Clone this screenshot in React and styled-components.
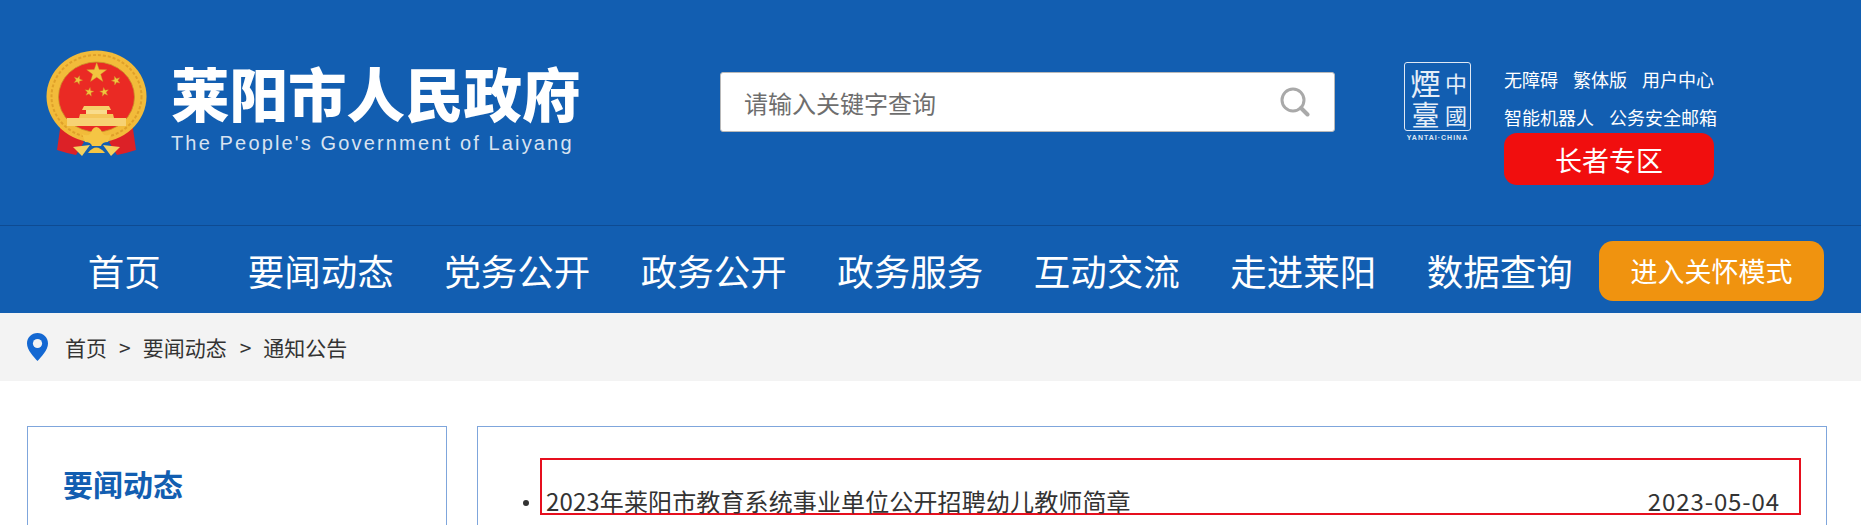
import React from "react";
import styled, { createGlobalStyle } from "styled-components";

const CJK = `"Noto Sans CJK SC", "Noto Sans", sans-serif`;

const GlobalStyle = createGlobalStyle`
html, body {
  margin: 0;
  padding: 0;
  background: #fff;
  font-family: ${CJK};
}
`;

const Page = styled.div`
height: 100vh;
overflow: hidden;
`;

const Header = styled.header`
display: flex;
height: 225px;
box-sizing: content-box;
padding-left: 46px;
background: #125eb1;
border-bottom: 1px solid #0e4b92;
`;

const Brand = styled.div`
display: flex;
width: 674px;
padding-top: 50px;
align-items: flex-start;
`;

const BrandText = styled.div`
display: flex;
flex-direction: column;
margin-left: 24px;
margin-top: 10px;
`;

const BrandName = styled.div`
font-size: 58.5px;
line-height: 64px;
font-weight: 900;
color: #fff;
white-space: nowrap;
`;

const BrandSub = styled.div`
font-family: "Liberation Sans", Arial, sans-serif;
font-size: 20px;
line-height: 24px;
letter-spacing: 2.15px;
color: #d8e3f1;
white-space: nowrap;
margin-top: 7px;
`;

const SearchBox = styled.div`
display: flex;
align-items: center;
justify-content: space-between;
box-sizing: border-box;
width: 615px;
height: 60px;
margin-top: 72px;
padding: 0 24px 0 23px;
background: #fff;
border: 1px solid #b9b9b9;
border-radius: 3px;
`;

const SearchInput = styled.input`
flex: 1;
padding: 0;
border: none;
outline: none;
background: transparent;
font-family: ${CJK};
font-size: 24px;
color: #666;
&::placeholder {
  color: #6e6e6e;
  opacity: 1;
}
`;

const Seal = styled.div`
display: flex;
flex-direction: column;
align-items: center;
width: 67px;
margin-left: 69px;
margin-top: 62px;
`;

const SealFrame = styled.div`
display: grid;
grid-template-columns: 37px 24px;
grid-template-rows: 34px 29px;
box-sizing: border-box;
width: 67px;
height: 69px;
padding: 2px;
border: 1px solid #dfe8f4;
border-radius: 3px;
color: #e6eef8;
font-family: "Noto Sans CJK TC", sans-serif;
font-weight: 400;
`;

const SealChar = styled.span`
display: flex;
align-items: center;
justify-content: center;
font-size: ${(p) => p.$size}px;
line-height: 1;
`;

const SealCaption = styled.div`
font-family: "Liberation Sans", Arial, sans-serif;
font-size: 7px;
line-height: 8px;
font-weight: 700;
letter-spacing: 1px;
margin-top: 3px;
color: #dfe8f4;
white-space: nowrap;
`;

const TopLinks = styled.div`
display: flex;
flex-direction: column;
width: 214px;
margin-left: 33px;
margin-top: 66px;
`;

const LinkRow = styled.div`
display: flex;
gap: 15px;
height: ${(p) => p.$height}px;
font-size: 18px;
line-height: 26px;
color: #fff;
white-space: nowrap;
`;

const ElderButton = styled.button`
width: 210px;
height: 52px;
padding: 0;
border: none;
border-radius: 13px;
background: #f10e0e;
color: #fff;
font-family: ${CJK};
font-size: 27px;
`;

const Nav = styled.nav`
display: flex;
align-items: center;
height: 87px;
padding-left: 26px;
background: #125eb1;
`;

const NavItem = styled.a`
width: 196.5px;
text-align: center;
font-size: 36.5px;
line-height: 50px;
margin-top: 2px;
color: #fff;
`;

const CareButton = styled.button`
width: 225px;
height: 60px;
margin-left: 1px;
margin-top: 2px;
padding: 0;
border: none;
border-radius: 14px;
background: #f0930f;
color: #fff;
font-family: ${CJK};
font-size: 27px;
`;

const Breadcrumb = styled.div`
display: flex;
align-items: center;
height: 68px;
padding-left: 27px;
background: #f3f3f3;
font-size: 21px;
color: #333;
`;

const Crumb = styled.span`
margin-left: ${(p) => p.$gap}px;
`;

const Main = styled.main`
display: flex;
gap: 30px;
padding: 45px 34px 0 27px;
`;

const SidePanel = styled.aside`
box-sizing: border-box;
width: 420px;
height: 400px;
padding: 28px 35px;
border: 1px solid #7fa6dc;
`;

const SideTitle = styled.h2`
margin: 0;
font-size: 30px;
line-height: 56px;
font-weight: 700;
color: #125eb1;
`;

const ListPanel = styled.section`
box-sizing: border-box;
flex: 1;
height: 400px;
padding: 31px 25px 0 45px;
border: 1px solid #7fa6dc;
`;

const ListRow = styled.div`
display: flex;
align-items: flex-end;
`;

const Bullet = styled.span`
flex: none;
width: 6px;
height: 6px;
margin: 0 11px 9px 0;
border-radius: 50%;
background: #333;
`;

const NewsItem = styled.a`
flex: 1;
display: flex;
align-items: flex-end;
justify-content: space-between;
box-sizing: border-box;
height: 57px;
padding: 0 19px 0 4px;
border: 2px solid #e60f1e;
font-size: 24px;
line-height: 24px;
color: #333;
`;

const NewsTitle = styled.span`
letter-spacing: 0.13px;
`;

const NewsDate = styled.span`
letter-spacing: 0.9px;
`;

const Star = ({ cx, cy, r, rot = 0 }) => {
  const pts = [];
  for (let i = 0; i < 10; i++) {
    const rad = i % 2 ? r * 0.4 : r;
    const a = ((i * 36 + rot - 90) * Math.PI) / 180;
    pts.push(`${(cx + rad * Math.cos(a)).toFixed(2)},${(cy + rad * Math.sin(a)).toFixed(2)}`);
  }
  return <polygon points={pts.join(" ")} fill="#f2c53f" stroke="#c9962a" strokeWidth="0.4" />;
};

const Emblem = () => (
  <svg width="101" height="107" viewBox="0 0 101 107" style={{ flex: "none" }}>
    <path d="M15 72 Q13 86 11 100 Q20 103 30 105 L38 92 Z" fill="#dc2127" />
    <path d="M86 72 Q88 86 90 100 Q81 103 71 105 L63 92 Z" fill="#dc2127" />
    <ellipse cx="50.5" cy="46.5" rx="50" ry="46" fill="#f2bb3a" />
    <ellipse cx="50.5" cy="46.5" rx="45" ry="41.5" fill="none" stroke="#dfa02a" strokeWidth="2" strokeDasharray="3 2" />
    <ellipse cx="50.5" cy="47" rx="38" ry="35" fill="#ea2a24" stroke="#c9902a" strokeWidth="0.8" />
    <Star cx={50.7} cy={23} r={10.5} />
    <Star cx={32} cy={30} r={4.6} rot={20} />
    <Star cx={70} cy={30.5} r={4.6} rot={-20} />
    <Star cx={43.3} cy={42} r={4.6} rot={10} />
    <Star cx={58.3} cy={42} r={4.6} rot={-10} />
    <path d="M38 56 L63 56 L65 60 L36 60 Z" fill="#f6cf6a" />
    <rect x="40" y="60" width="21" height="4" fill="#f9dc8c" />
    <path d="M34 64 L67 64 L68 68 L33 68 Z" fill="#f4c65a" />
    <rect x="21" y="68" width="59" height="8" fill="#f7d273" />
    <path d="M36 84 Q44 88 46 80 Q50 74 55 80 Q57 88 65 84 L62 92 Q56 92 55 96 L46 96 Q45 92 39 92 Z" fill="#f5c544" />
    <path d="M27 97 L44 95 L36 106 Z" fill="#f4d25f" />
    <path d="M74 97 L57 95 L65 106 Z" fill="#f4d25f" />
    <path d="M42 103 Q50 92 59 103 Z" fill="#f5c544" />
  </svg>
);

const SearchIcon = () => (
  <svg width="30" height="30" viewBox="0 0 30 30" style={{ flex: "none" }}>
    <circle cx="13" cy="13" r="11" fill="none" stroke="#a9a9a9" strokeWidth="3" />
    <line x1="21" y1="21" x2="27.5" y2="27.5" stroke="#a9a9a9" strokeWidth="4" strokeLinecap="round" />
  </svg>
);

const PinIcon = () => (
  <svg width="21" height="28" viewBox="0 0 21 28" style={{ flex: "none" }}>
    <path d="M10.5 0 C4.7 0 0 4.6 0 10.4 C0 17 7 24 10.5 28 C14 24 21 17 21 10.4 C21 4.6 16.3 0 10.5 0 Z" fill="#1468d2" />
    <circle cx="10.5" cy="10.5" r="4.6" fill="#f3f3f3" />
  </svg>
);

const navItems = ["首页", "要闻动态", "党务公开", "政务公开", "政务服务", "互动交流", "走进莱阳", "数据查询"];

export default function App() {
  return (
    <Page>
      <GlobalStyle />
      <Header>
        <Brand>
          <Emblem />
          <BrandText>
            <BrandName>莱阳市人民政府</BrandName>
            <BrandSub>The People's Government of Laiyang</BrandSub>
          </BrandText>
        </Brand>
        <SearchBox>
          <SearchInput placeholder="请输入关键字查询" />
          <SearchIcon />
        </SearchBox>
        <Seal>
          <SealFrame>
            <SealChar $size={30}>煙</SealChar>
            <SealChar $size={22}>中</SealChar>
            <SealChar $size={28}>臺</SealChar>
            <SealChar $size={22}>國</SealChar>
          </SealFrame>
          <SealCaption>YANTAI·CHINA</SealCaption>
        </Seal>
        <TopLinks>
          <LinkRow $height={38}>
            <span>无障碍</span>
            <span>繁体版</span>
            <span>用户中心</span>
          </LinkRow>
          <LinkRow $height={29}>
            <span>智能机器人</span>
            <span>公务安全邮箱</span>
          </LinkRow>
          <ElderButton>长者专区</ElderButton>
        </TopLinks>
      </Header>
      <Nav>
        {navItems.map((item) => (
          <NavItem key={item}>{item}</NavItem>
        ))}
        <CareButton>进入关怀模式</CareButton>
      </Nav>
      <Breadcrumb>
        <PinIcon />
        <Crumb $gap={17}>首页</Crumb>
        <Crumb $gap={12}>&gt;</Crumb>
        <Crumb $gap={12}>要闻动态</Crumb>
        <Crumb $gap={13}>&gt;</Crumb>
        <Crumb $gap={12}>通知公告</Crumb>
      </Breadcrumb>
      <Main>
        <SidePanel>
          <SideTitle>要闻动态</SideTitle>
        </SidePanel>
        <ListPanel>
          <ListRow>
            <Bullet />
            <NewsItem>
              <NewsTitle>2023年莱阳市教育系统事业单位公开招聘幼儿教师简章</NewsTitle>
              <NewsDate>2023-05-04</NewsDate>
            </NewsItem>
          </ListRow>
        </ListPanel>
      </Main>
    </Page>
  );
}
